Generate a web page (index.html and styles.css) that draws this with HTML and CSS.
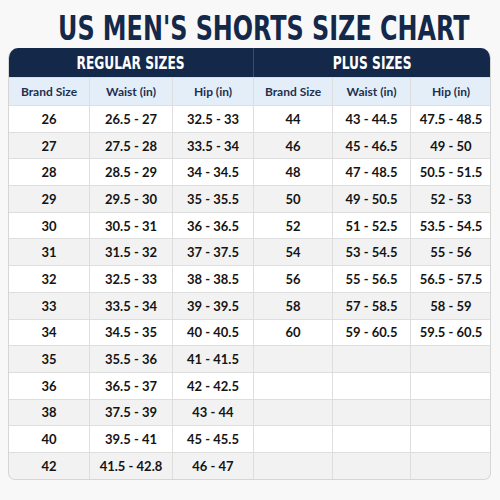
FILE: index.html
```html
<!DOCTYPE html>
<html>
<head>
<meta charset="utf-8">
<link rel="stylesheet" href="styles.css">
</head>
<body>
<div class="page">
  <h1 class="title"><span class="narrow">US MEN'S SHORTS SIZE CHART</span></h1>
  <div class="chart">
    <div class="group-head first"><span class="narrow">REGULAR SIZES</span></div>
    <div class="group-head second"><span class="narrow">PLUS SIZES</span></div>
    <div class="sub">Brand Size</div><div class="sub">Waist (in)</div><div class="sub">Hip (in)</div>
    <div class="sub">Brand Size</div><div class="sub">Waist (in)</div><div class="sub">Hip (in)</div>

    <div class="c">26</div><div class="c">26.5 - 27</div><div class="c">32.5 - 33</div><div class="c">44</div><div class="c">43 - 44.5</div><div class="c">47.5 - 48.5</div>
    <div class="c g">27</div><div class="c g">27.5 - 28</div><div class="c g">33.5 - 34</div><div class="c g">46</div><div class="c g">45 - 46.5</div><div class="c g">49 - 50</div>
    <div class="c">28</div><div class="c">28.5 - 29</div><div class="c">34 - 34.5</div><div class="c">48</div><div class="c">47 - 48.5</div><div class="c">50.5 - 51.5</div>
    <div class="c g">29</div><div class="c g">29.5 - 30</div><div class="c g">35 - 35.5</div><div class="c g">50</div><div class="c g">49 - 50.5</div><div class="c g">52 - 53</div>
    <div class="c">30</div><div class="c">30.5 - 31</div><div class="c">36 - 36.5</div><div class="c">52</div><div class="c">51 - 52.5</div><div class="c">53.5 - 54.5</div>
    <div class="c g">31</div><div class="c g">31.5 - 32</div><div class="c g">37 - 37.5</div><div class="c g">54</div><div class="c g">53 - 54.5</div><div class="c g">55 - 56</div>
    <div class="c">32</div><div class="c">32.5 - 33</div><div class="c">38 - 38.5</div><div class="c">56</div><div class="c">55 - 56.5</div><div class="c">56.5 - 57.5</div>
    <div class="c g">33</div><div class="c g">33.5 - 34</div><div class="c g">39 - 39.5</div><div class="c g">58</div><div class="c g">57 - 58.5</div><div class="c g">58 - 59</div>
    <div class="c">34</div><div class="c">34.5 - 35</div><div class="c">40 - 40.5</div><div class="c">60</div><div class="c">59 - 60.5</div><div class="c">59.5 - 60.5</div>
    <div class="c g">35</div><div class="c g">35.5 - 36</div><div class="c g">41 - 41.5</div><div class="c g"></div><div class="c g"></div><div class="c g"></div>
    <div class="c">36</div><div class="c">36.5 - 37</div><div class="c">42 - 42.5</div><div class="c"></div><div class="c"></div><div class="c"></div>
    <div class="c g">38</div><div class="c g">37.5 - 39</div><div class="c g">43 - 44</div><div class="c g"></div><div class="c g"></div><div class="c g"></div>
    <div class="c">40</div><div class="c">39.5 - 41</div><div class="c">45 - 45.5</div><div class="c"></div><div class="c"></div><div class="c"></div>
    <div class="c g">42</div><div class="c g">41.5 - 42.8</div><div class="c g">46 - 47</div><div class="c g"></div><div class="c g"></div><div class="c g"></div>
  </div>
</div>
</body>
</html>
```
FILE: styles.css
```css
html, body {
  margin: 0;
  padding: 0;
  background: #f8f8f8;
}
.page {
  width: 500px;
  height: 500px;
  padding: 8px 0 0 8px;
  box-sizing: border-box;
  font-family: Lato, "Open Sans", "Liberation Sans", sans-serif;
}
.narrow {
  display: inline-block;
  white-space: nowrap;
  font-family: "DejaVu Sans Condensed", "DejaVu Sans", sans-serif;
  font-stretch: condensed;
  font-weight: 700;
}
.title {
  margin: 0;
  height: 40px;
  display: flex;
  justify-content: center;
  padding: 2px 0 0 28px;
  box-sizing: border-box;
  width: 483px;
  font-size: 34px;
  line-height: 36px;
  color: #14294a;
}
.title .narrow {
  transform: scaleX(0.78);
  transform-origin: center;
}
.chart {
  width: 483px;
  display: grid;
  grid-template-columns: 80px 82px 80px 78px 77px 80px;
  grid-template-rows: 29px 27px;
  grid-auto-rows: 25.7px;
  gap: 1px;
  background: #dedede;
  border: 1px solid #d6d6d6;
  border-top: none;
  border-radius: 10px 10px 7px 7px;
  overflow: hidden;
  box-sizing: border-box;
}
.group-head {
  grid-column: span 3;
  background: #14294a;
  color: #fff;
  display: flex;
  align-items: center;
  justify-content: center;
  font-size: 17px;
  padding-top: 1px;
}
.group-head .narrow {
  transform: scaleX(0.8);
}
.group-head.first {
  margin-right: -1px;
  border-right: 1px solid #3a4d6b;
}
.sub {
  background: #e4eef9;
  color: #1c3050;
  font-size: 12px;
  font-weight: 700;
  display: flex;
  align-items: center;
  justify-content: center;
}
.c {
  background: #fff;
  color: #141414;
  font-size: 13px;
  font-weight: 700;
  display: flex;
  align-items: center;
  justify-content: center;
}
.c.g {
  background: #f2f2f2;
}
```
